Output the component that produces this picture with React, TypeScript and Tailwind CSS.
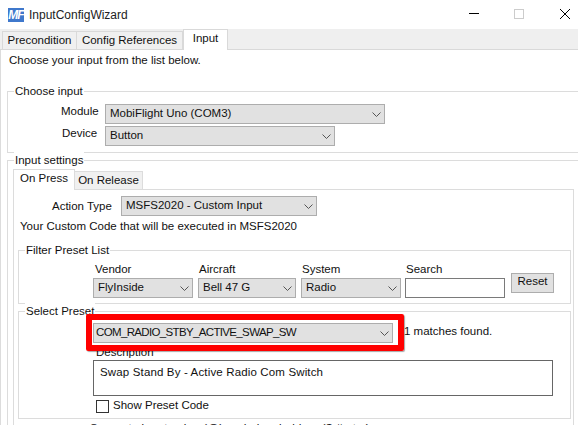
import { ReactNode } from "react";

const Select = ({ value, className, textClass }: { value: string; className: string; textClass?: string }) => (
  <div className={`flex h-5 items-center justify-between border border-[#adadad] bg-[#e1e1e1] pr-[3px] ${textClass ? "pl-[2px]" : "pl-[4px]"} ${className}`}>
    <span className={`whitespace-nowrap ${textClass ?? ""}`}>{value}</span>
    <svg width="9" height="5" viewBox="0 0 9 5" className="text-[#555]">
      <path d="M0.5 0.5L4.5 4.5L8.5 0.5" fill="none" stroke="currentColor" strokeWidth="1" />
    </svg>
  </div>
);

const Group = ({ title, className, children }: { title: string; className: string; children: ReactNode }) => (
  <div className={`relative border border-[#dcdcdc] ${className}`}>
    <span className="absolute -top-[9px] left-[6px] bg-white px-px leading-[16px] whitespace-nowrap">{title}</span>
    {children}
  </div>
);

const Label = ({ text, className }: { text: string; className?: string }) => (
  <span className={`block leading-[16px] whitespace-nowrap ${className ?? ""}`}>{text}</span>
);

function Logo() {
  return (
    <div className="flex h-[14px] w-[16px] items-center justify-center bg-[#3f78cc] text-[12px] leading-none font-bold italic tracking-[-1px] text-white">
      MF
    </div>
  );
}

export default function App() {
  return (
    <div className="h-[425px] w-[578px] overflow-hidden bg-white text-[11.5px] text-[#111] [font-family:'Liberation_Sans','Noto_Sans_CJK_JP',sans-serif]">
      {/* title bar */}
      <div className="flex h-[29px] items-center pl-[8px]">
        <Logo />
        <span className="ml-[5px] text-[12px] text-[#222]">InputConfigWizard</span>
        <div className="-mt-[2px] ml-auto flex items-center pr-[8px]">
          <div className="mr-[35px] h-px w-[10px] bg-black" />
          <div className="mr-[36px] h-[10px] w-[10px] border border-[#ccc]" />
          <svg width="10" height="10" viewBox="0 0 10 10" className="text-black">
            <path d="M0 0L10 10M10 0L0 10" stroke="currentColor" strokeWidth="1" />
          </svg>
        </div>
      </div>

      {/* tabs */}
      <div className="flex h-[21px] items-end border-b border-[#d9d9d9] bg-[#efefef] pl-[2px]">
        <div className="flex h-[18px] w-[75px] items-center justify-center border border-b-0 border-[#d9d9d9] bg-[#f0f0f0]">Precondition</div>
        <div className="flex h-[18px] w-[106px] items-center justify-center border border-l-0 border-b-0 border-[#d9d9d9] bg-[#f0f0f0]">Config References</div>
        <div className="-mb-px flex h-[21px] w-[45px] items-center justify-center border border-b-0 border-[#d9d9d9] bg-white pb-[2px]">Input</div>
      </div>

      <div className="h-[375px] border-l border-[#dcdcdc]">
        <div className="pl-[8px] pt-[2px]">
          <Label text="Choose your input from the list below." />
        </div>

        {/* choose input */}
        <Group title="Choose input" className="ml-[6px] mt-[23px] h-[62px] w-[600px]">
          <div className="flex items-start pt-[12px]">
            <Label text="Module" className="-mt-px ml-[53px] w-[44px]" />
            <Select value="MobiFlight Uno (COM3)" className="w-[280px]" />
          </div>
          <div className="mt-[2px] flex items-start">
            <Label text="Device" className="-mt-px ml-[54px] w-[43px]" />
            <Select value="Button" className="w-[230px]" />
          </div>
        </Group>

        {/* input settings */}
        <Group title="Input settings" className="ml-[6px] mt-[7px] w-[600px] pb-[20px]">
          <div className="flex items-end pl-[5px] pt-[8px]">
            <div className="-mb-px z-10 flex h-[21px] w-[62px] items-center justify-center border border-b-0 border-[#dcdcdc] bg-white pb-[2px]">On Press</div>
            <div className="flex h-[18px] w-[68px] items-center justify-center border border-l-0 border-b-0 border-[#dcdcdc] bg-[#f0f0f0]">On Release</div>
          </div>

          <div className="ml-[5px] w-[561px] border border-[#dcdcdc] pb-[20px]">
            <div className="flex items-center pt-[6px]">
              <Label text="Action Type" className="ml-[38px] w-[69px]" />
              <Select value="MSFS2020 - Custom Input" className="w-[196px]" />
            </div>
            <Label text="Your Custom Code that will be executed in MSFS2020" className="ml-[6px] mt-[2px]" />

            <Group title="Filter Preset List" className="ml-[4px] mt-[16px] h-[54px] w-[553px]">
              <div className="flex pl-[74px] pt-[10px]">
                <div className="w-[105px]">
                  <Label text="Vendor" className="mb-px ml-[2px]" />
                  <Select value="FlyInside" className="w-[100px]" />
                </div>
                <div className="w-[103px]">
                  <Label text="Aircraft" className="mb-px ml-[1px]" />
                  <Select value="Bell 47 G" className="w-[98px]" />
                </div>
                <div className="w-[104px]">
                  <Label text="System" className="mb-px ml-[1px]" />
                  <Select value="Radio" className="w-[100px]" />
                </div>
                <div className="w-[106px]">
                  <Label text="Search" className="mb-px ml-[1px]" />
                  <div className="h-5 w-[100px] border border-[#7a7a7a] bg-white" />
                </div>
                <div className="mt-[12px] flex h-5 w-[43px] items-center justify-center border border-[#adadad] bg-[#e1e1e1] pb-[2px]">Reset</div>
              </div>
            </Group>

            <Group title="Select Preset" className="ml-[4px] mt-[7px] h-[108px] w-[553px]">
              <div className="flex items-center pl-[74px] pt-[11px]">
                <div className="relative">
                  <Select value="COM_RADIO_STBY_ACTIVE_SWAP_SW" className="w-[300px]" textClass="tracking-[-0.65px]" />
                  {/* red annotation box */}
                  <div className="absolute -bottom-[8px] -left-[7px] -right-[11px] -top-[9px] z-10 rounded-[2px] border-[6px] border-[#ff0000] shadow-[1px_1px_1px_rgba(0,0,0,0.35)]" />
                </div>
                <Label text="1 matches found." className="ml-[11px] -mt-[4px]" />
              </div>
              <Label text="Description" className="ml-[77px] mt-[1px]" />
              <div className="ml-[74px] h-[36px] w-[460px] border border-[#666] px-[6px] pt-[3px] leading-[16px] tracking-[0.15px]">
                Swap Stand By - Active Radio Com Switch
              </div>
              <div className="ml-[77px] mt-[1px] flex items-start">
                <div className="mt-[3px] h-[13px] w-[13px] border border-[#333] bg-white" />
                <Label text="Show Preset Code" className="ml-[4px]" />
              </div>
            </Group>

            <Label text="Supports input value (@) and placeholders ($,# etc.)" className="ml-[76px] mt-[1px] tracking-[0.25px]" />
          </div>
        </Group>
      </div>
    </div>
  );
}
